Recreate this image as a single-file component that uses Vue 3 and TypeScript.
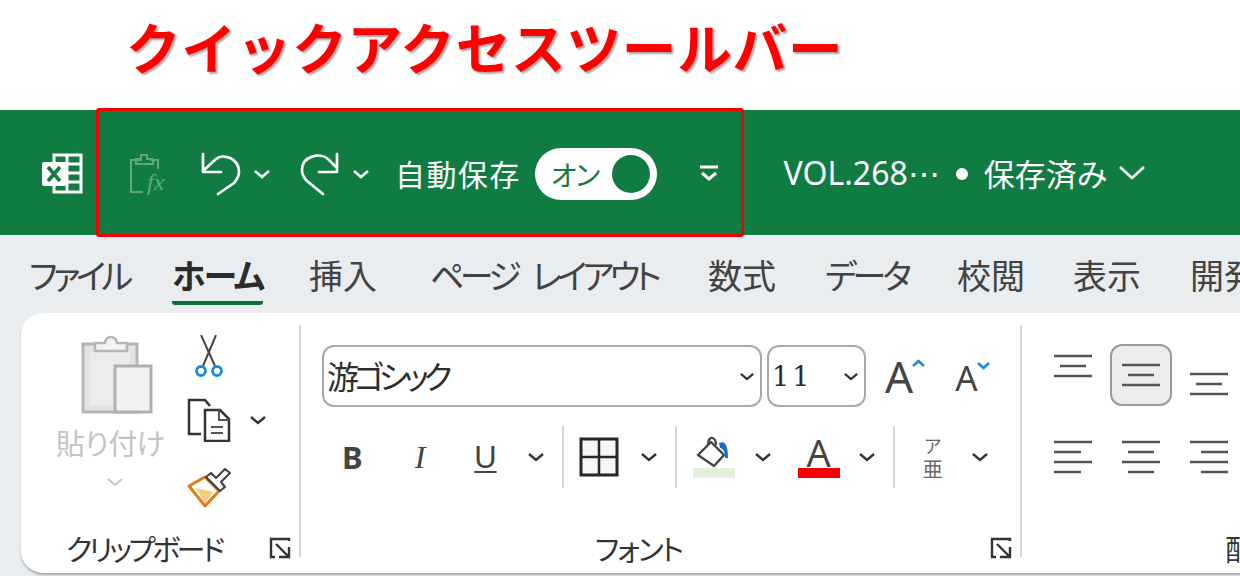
<script setup lang="ts">
// Excel リボンの説明図: クイックアクセスツールバー
const tabs = [
  { label: 'ファイル', width: 143, spacing: -4.5, word: 0 },
  { label: 'ホーム', width: 137, spacing: -2, word: 0, active: true },
  { label: '挿入', width: 121, spacing: 0, word: 0 },
  { label: 'ページ レイアウト', width: 278, spacing: -4.6, word: 12 },
  { label: '数式', width: 117, spacing: 0, word: 0 },
  { label: 'データ', width: 132, spacing: -4, word: 0 },
  { label: '校閲', width: 116, spacing: 0, word: 0 },
  { label: '表示', width: 117, spacing: 0, word: 0 },
  { label: '開発', width: 80, spacing: 0, word: 0 }
]

const topAlign = [
  { id: 'top', active: false },
  { id: 'middle', active: true },
  { id: 'bottom', active: false }
]
</script>

<template>
  <div class="page">
    <header class="caption">クイックアクセスツールバー</header>

    <section class="titlebar">
      <div class="qat-frame"></div>
      <svg class="xl-logo" width="44" height="42" viewBox="0 0 44 42">
        <path d="M14 2h27v37H14z" fill="none" stroke="#fff" stroke-width="3" />
        <path d="M27 3v35M15 11h25M15 20h25M15 29h25" stroke="#fff" stroke-width="3" />
        <rect x="2" y="9" width="24" height="24" rx="2" fill="#fff" />
        <path d="M8 14l12 14M20 14L8 28" stroke="#107c41" stroke-width="3.6" />
      </svg>

      <svg class="qat-fx" width="40" height="44" viewBox="0 0 40 44">
        <path d="M14 8H3v32h12M22 8h8v9" fill="none" stroke="#5fa882" stroke-width="2" />
        <path d="M8 12V7h5V3h6v4h6v5z" fill="none" stroke="#5fa882" stroke-width="2" />
        <text x="19" y="38" class="fx-text">fx</text>
      </svg>

      <svg class="undo" width="42" height="44" viewBox="0 0 42 44">
        <path d="M2 2v18h18M3 18L15 7c7-6 23-1 23 13 0 5-2 7-5 11L17 42" fill="none" stroke="#fff" stroke-width="2.7" stroke-linejoin="round" stroke-linecap="round" />
      </svg>
      <svg class="undo-chev" width="16" height="10" viewBox="0 0 16 10"><path d="M1 2l7 6 7-6" fill="none" stroke="#fff" stroke-width="2.6" /></svg>

      <svg class="redo" width="42" height="44" viewBox="0 0 42 44">
        <path d="M37 2v18H19M36 15l-8-8C20 0 2 4 2 18c0 4 2 8 5 11l16 13" fill="none" stroke="#fff" stroke-width="2.7" stroke-linejoin="round" stroke-linecap="round" />
      </svg>
      <svg class="redo-chev" width="16" height="10" viewBox="0 0 16 10"><path d="M1 2l7 6 7-6" fill="none" stroke="#fff" stroke-width="2.6" /></svg>

      <span class="autosave">自動保存</span>
      <div class="toggle">
        <span class="toggle-text">オン</span>
        <span class="toggle-knob"></span>
      </div>
      <svg class="qat-more" width="20" height="18" viewBox="0 0 20 18">
        <path d="M1 2h18" stroke="#fff" stroke-width="3" />
        <path d="M3 8l7 6 7-6" fill="none" stroke="#fff" stroke-width="3" />
      </svg>

      <span class="doc-name">VOL.268⋯</span>
      <i class="doc-dot"></i>
      <span class="doc-status">保存済み</span>
      <svg class="doc-chev" width="26" height="16" viewBox="0 0 26 16"><path d="M1 2l12 11L25 2" fill="none" stroke="#fff" stroke-width="2.6" /></svg>
    </section>

    <nav class="tabs">
      <div v-for="t in tabs" :key="t.label" class="tab" :class="{ active: t.active }" :style="{ width: t.width + 'px', letterSpacing: t.spacing + 'px', wordSpacing: t.word + 'px' }">
        <span class="tab-label">{{ t.label }}</span>
      </div>
    </nav>

    <section class="ribbon">
      <!-- クリップボード -->
      <div class="group clip">
        <div class="clip-body">
          <div class="paste">
            <svg width="74" height="80" viewBox="0 0 74 80">
              <path d="M3 9h54v68H3z" fill="#e3e3e3" stroke="#b5b5b5" stroke-width="3" />
              <path d="M10 16h40v54H10z" fill="#ececec" />
              <path d="M15 16V8h10c1-8 11-8 12 0h10v8z" fill="#f3f3f3" stroke="#b5b5b5" stroke-width="2.5" />
              <path d="M35 31h36v46H35z" fill="#f2f2f2" stroke="#b0b0b0" stroke-width="3" />
            </svg>
            <span class="paste-label">貼り付け</span>
            <svg class="paste-chev" width="16" height="10" viewBox="0 0 16 10"><path d="M1 2l7 6 7-6" fill="none" stroke="#c6c6c6" stroke-width="2" /></svg>
          </div>
          <div class="clip-tools">
            <svg class="cut" width="30" height="42" viewBox="0 0 30 42">
              <path d="M7 0l14 31M22 0L9 31" stroke="#444" stroke-width="2" fill="none" />
              <circle cx="7" cy="36" r="4.500" fill="none" stroke="#1c8ad6" stroke-width="2.800" />
              <circle cx="23" cy="36" r="4.500" fill="none" stroke="#1c8ad6" stroke-width="2.800" />
            </svg>
            <div class="copy-row">
              <svg width="44" height="44" viewBox="0 0 44 44">
                <path d="M14 36H2V2h16l5 6" fill="none" stroke="#333" stroke-width="2.5" />
                <path d="M18 12h15l9 9v22H18z" fill="#fff" stroke="#333" stroke-width="2.5" />
                <path d="M32 12v10h10M24 29h12M24 35h12" fill="none" stroke="#555" stroke-width="2" />
              </svg>
              <svg class="chev" width="16" height="10" viewBox="0 0 16 10"><path d="M1 2l7 6 7-6" fill="none" stroke="#333" stroke-width="2.4" /></svg>
            </div>
            <svg class="brush" width="44" height="40" viewBox="0 0 44 40">
              <path d="M2 18L18 9l14 14-14 15z" fill="#fff" stroke="#e07b16" stroke-width="3" stroke-linejoin="round" />
              <path d="M9 20l17 4-8 11z" fill="#f6c97c" />
              <path d="M19 9l5-4 5 5 9-9 5 4-9 9 4 5-5 4z" fill="#fff" stroke="#444" stroke-width="2.200" stroke-linejoin="round" />
            </svg>
          </div>
        </div>
        <div class="group-label clip-label">クリップボード</div>
        <svg class="launcher" width="22" height="22" viewBox="0 0 22 22"><path d="M20 4V2H2v18h4M7 7l12 12M20 10v10H10" fill="none" stroke="#333" stroke-width="2.4" /></svg>
      </div>

      <!-- フォント -->
      <div class="group font">
        <div class="font-row top">
          <div class="combo name">
            <span>游ゴシック</span>
            <svg class="chev" width="14" height="9" viewBox="0 0 16 10"><path d="M1 2l7 6 7-6" fill="none" stroke="#333" stroke-width="2.6" /></svg>
          </div>
          <div class="combo size">
            <span>11</span>
            <svg class="chev" width="14" height="9" viewBox="0 0 16 10"><path d="M1 2l7 6 7-6" fill="none" stroke="#333" stroke-width="2.6" /></svg>
          </div>
          <div class="grow-btn big">
            <span class="glyph-a">A</span>
            <svg width="13" height="8" viewBox="0 0 13 8"><path d="M1 7l5.500-5 5.500 5" fill="none" stroke="#1c8ad6" stroke-width="2.600" /></svg>
          </div>
          <div class="grow-btn small">
            <span class="glyph-a">A</span>
            <svg width="13" height="8" viewBox="0 0 13 8"><path d="M1 1l5.500 5 5.500-5" fill="none" stroke="#1c8ad6" stroke-width="2.600" /></svg>
          </div>
        </div>
        <div class="font-row bottom">
          <span class="btn-b">B</span>
          <span class="btn-i">I</span>
          <span class="btn-u">U</span>
          <svg class="chev c-u" width="16" height="10" viewBox="0 0 16 10"><path d="M1 2l7 6 7-6" fill="none" stroke="#333" stroke-width="2.4" /></svg>
          <i class="vsep"></i>
          <svg class="borders" width="40" height="40" viewBox="0 0 40 40">
            <path d="M2 2h36v36H2z" fill="#f7f7f7" stroke="#262626" stroke-width="3" />
            <path d="M20 2v36M2 20h36" stroke="#262626" stroke-width="2.5" />
          </svg>
          <svg class="chev c-b" width="16" height="10" viewBox="0 0 16 10"><path d="M1 2l7 6 7-6" fill="none" stroke="#333" stroke-width="2.4" /></svg>
          <i class="vsep"></i>
          <div class="swatch-btn fill">
            <svg width="36" height="32" viewBox="0 0 36 32">
              <path d="M2 19L15 6l13 13-10 11z" fill="#fff" stroke="#444" stroke-width="2.400" stroke-linejoin="round" />
              <path d="M12 9c0-10 8-9 8 0" fill="none" stroke="#444" stroke-width="2.400" />
              <path d="M23 7c6-3 9 2 9 15h-3c0-6-1-9-5-10z" fill="#1571c0" />
            </svg>
            <i class="swatch pale"></i>
          </div>
          <svg class="chev c-f" width="16" height="10" viewBox="0 0 16 10"><path d="M1 2l7 6 7-6" fill="none" stroke="#333" stroke-width="2.4" /></svg>
          <div class="swatch-btn color">
            <span class="glyph-fc">A</span>
            <i class="swatch red"></i>
          </div>
          <svg class="chev c-c" width="16" height="10" viewBox="0 0 16 10"><path d="M1 2l7 6 7-6" fill="none" stroke="#333" stroke-width="2.4" /></svg>
          <i class="vsep"></i>
          <div class="furi">
            <span class="furi-top">ア</span>
            <span class="furi-bot">亜</span>
          </div>
          <svg class="chev c-p" width="16" height="10" viewBox="0 0 16 10"><path d="M1 2l7 6 7-6" fill="none" stroke="#333" stroke-width="2.4" /></svg>
        </div>
        <div class="group-label font-label">フォント</div>
        <svg class="launcher" width="22" height="22" viewBox="0 0 22 22"><path d="M20 4V2H2v18h4M7 7l12 12M20 10v10H10" fill="none" stroke="#333" stroke-width="2.4" /></svg>
      </div>

      <!-- 配置 -->
      <div class="group align">
        <div class="align-grid">
          <div v-for="a in topAlign" :key="a.id" class="cell" :class="[a.id, { active: a.active }]">
            <svg width="38" height="24" viewBox="0 0 38 24">
              <path d="M0 2h38M6 12h26M0 22h38" stroke="#555" stroke-width="2.500" />
            </svg>
          </div>
          <div class="cell lower">
            <svg width="38" height="34" viewBox="0 0 38 34"><path d="M0 2h38M0 12h27M0 22h38M0 32h27" stroke="#555" stroke-width="2.500" /></svg>
          </div>
          <div class="cell lower">
            <svg width="38" height="34" viewBox="0 0 38 34"><path d="M0 2h38M6 12h26M0 22h38M6 32h26" stroke="#555" stroke-width="2.500" /></svg>
          </div>
          <div class="cell lower">
            <svg width="38" height="34" viewBox="0 0 38 34"><path d="M0 2h38M11 12h27M0 22h38M11 32h27" stroke="#555" stroke-width="2.500" /></svg>
          </div>
        </div>
        <div class="group-label align-label">配置</div>
      </div>
    </section>
  </div>
</template>

<style>
html, body {
  margin: 0;
  background: #fff;
}
</style>

<style scoped>
.page {
  width: 1240px;
  height: 576px;
  overflow: hidden;
  background: linear-gradient(#fff 235px, #e9edf0 235px);
  font-family: "Noto Sans CJK JP", "Noto Sans", sans-serif;
  font-feature-settings: "palt";
  color: #333;
}

.caption {
  height: 110px;
  box-sizing: border-box;
  padding: 13px 0 0 126px;
  font-size: 54.600px;
  line-height: 66px;
  font-weight: 700;
  font-feature-settings: normal;
  letter-spacing: 0.8px;
  white-space: nowrap;
  color: #ff0000;
  text-shadow: 2px 2px 2px rgba(0, 0, 0, 0.35);
}

.titlebar {
  position: relative;
  height: 125px;
  display: flex;
  align-items: center;
  background: #107c41;
  color: #fff;
}

.qat-frame {
  position: absolute;
  left: 96px;
  top: -2px;
  width: 642px;
  height: 123px;
  border: 3px solid #f00000;
  border-radius: 3px;
}

.xl-logo { margin: 2px 0 0 40px; }
.qat-fx { margin: 3px 0 0 44px; }
.undo { margin: 3px 0 0 33px; }
.undo-chev { margin: 2px 0 0 11px; }
.redo { margin: 3px 0 0 30px; }
.redo-chev { margin: 2px 0 0 11px; }

.autosave {
  margin: 1px 0 0 26px;
  font-size: 30px;
  line-height: 40px;
  letter-spacing: 1.400px;
  white-space: nowrap;
}

.toggle {
  width: 122px;
  height: 52px;
  margin: 2px 0 0 14px;
  box-sizing: border-box;
  padding: 0 7px 0 16px;
  display: flex;
  align-items: center;
  justify-content: space-between;
  border-radius: 26px;
  background: #fff;
}

.toggle-text {
  font-size: 28px;
  line-height: 30px;
  letter-spacing: -1px;
  color: #107c41;
}

.toggle-knob {
  width: 38px;
  height: 38px;
  border-radius: 50%;
  background: #107c41;
}

.qat-more { margin: 2px 0 0 42px; }

.doc-name {
  margin: 1px 0 0 65px;
  font-family: "Noto Sans", sans-serif;
  font-size: 32px;
  line-height: 40px;
  white-space: nowrap;
}

.doc-dot {
  display: block;
  flex: none;
  width: 12px;
  height: 12px;
  margin: 2px 0 0 16px;
  border-radius: 50%;
  background: #fff;
}

.doc-status {
  margin: 1px 0 0 16px;
  font-size: 31px;
  line-height: 40px;
  white-space: nowrap;
}

.doc-chev { margin: 0 0 0 12px; }

.tabs {
  height: 78px;
  box-sizing: border-box;
  padding-left: 29px;
  display: flex;
}

.tab {
  flex: none;
  box-sizing: border-box;
  padding-top: 19px;
  white-space: nowrap;
  font-size: 34px;
  line-height: 42px;
  color: #424242;
}

.tab-label {
  display: inline-block;
}

.tab.active .tab-label {
  font-weight: 700;
  color: #2b2b2b;
  padding-bottom: 5px;
  border-bottom: 4px solid #0e6f3b;
  border-radius: 0 0 3px 3px;
}

.ribbon {
  position: relative;
  width: 1300px;
  height: 260px;
  margin-left: 21px;
  display: flex;
  background: #fff;
  border-radius: 22px 0 0 22px;
  box-shadow: 0 2px 2px rgba(0, 0, 0, 0.28);
}

.group {
  position: relative;
  flex: none;
  box-sizing: border-box;
  height: 232px;
  margin-top: 12px;
  border-right: 2px solid #d6d6d6;
}

.group-label {
  position: absolute;
  bottom: -9px;
  font-size: 29px;
  line-height: 36px;
  white-space: nowrap;
  color: #333;
}

.launcher {
  position: absolute;
  right: 8px;
  bottom: -2px;
}

/* クリップボード */
.clip {
  width: 280px;
}

.clip-body {
  display: flex;
  padding: 10px 0 0 59px;
}

.paste {
  width: 108px;
  display: flex;
  flex-direction: column;
  align-items: flex-start;
}

.paste-label {
  margin: 9px 0 0 -24px;
  font-size: 29px;
  line-height: 36px;
  letter-spacing: -0.5px;
  color: #c4c4c4;
  white-space: nowrap;
}

.paste-chev {
  margin: 17px 0 0 27px;
}

.clip-tools {
  display: flex;
  flex-direction: column;
  align-items: flex-start;
  margin-left: -1px;
}

.cut {
  margin: 0 0 0 7px;
}

.copy-row {
  display: flex;
  align-items: center;
  margin-top: 21px;
}

.copy-row .chev {
  margin-left: 19px;
}

.brush {
  margin-top: 26px;
}

.clip-label {
  left: 45px;
  letter-spacing: -3.300px;
}

/* フォント */
.font {
  width: 721px;
}

.font-row {
  display: flex;
  align-items: center;
}

.font-row.top {
  height: 62px;
  margin: 20px 0 0 21px;
  gap: 5px;
}

.combo {
  height: 62px;
  box-sizing: border-box;
  display: flex;
  align-items: center;
  justify-content: space-between;
  padding: 0 6px 0 3px;
  border: 2px solid #a9a9a9;
  border-radius: 12px;
  font-size: 32px;
  letter-spacing: -5px;
  color: #2d2d2d;
}

.combo span {
  margin-top: -3px;
}

.combo.name { width: 440px; }
.combo.size { width: 99px; }

.combo.size span {
  font-family: "DejaVu Serif", "Noto Sans", serif;
  font-size: 27px;
  letter-spacing: 3px;
  margin-top: 0;
}

.grow-btn {
  display: flex;
  align-items: flex-start;
}

.glyph-a {
  font-family: "Noto Sans", sans-serif;
  line-height: 1;
  color: #444;
}

.grow-btn.big { margin-left: 14px; }
.grow-btn.big .glyph-a { font-size: 44px; }
.grow-btn.big svg { margin: 5px 0 0 -1px; }
.grow-btn.small { margin-left: 25px; margin-top: 2px; }
.grow-btn.small .glyph-a { font-size: 35px; }
.grow-btn.small svg { margin: 2px 0 0 -1px; }

.font-row.bottom {
  height: 62px;
  margin: 19px 0 0 41px;
}

.btn-b, .btn-i, .btn-u {
  font-family: "Liberation Sans", sans-serif;
  font-size: 32px;
  line-height: 40px;
  color: #444;
}

.btn-b { font-family: "Noto Sans", sans-serif; font-weight: 700; font-size: 31px; }
.btn-i { margin-left: 52px; font-family: "Liberation Serif", serif; font-style: italic; }
.btn-u {
  margin-left: 49px;
  font-size: 31px;
  line-height: 31px;
  text-decoration: underline;
  text-underline-offset: 3px;
  text-decoration-thickness: 2px;
}

.c-u { margin-left: 31px; }

.vsep {
  display: block;
  flex: none;
  width: 2px;
  height: 62px;
  margin-left: 18px;
  background: #d6d6d6;
}

.borders { margin-left: 15px; }
.c-b { margin-left: 22px; }

.swatch-btn {
  width: 42px;
  display: flex;
  flex-direction: column;
  align-items: center;
}

.swatch {
  display: block;
  width: 42px;
  height: 10px;
}

.swatch.pale { background: #e2efda; }
.swatch.red { background: #f70000; }

.swatch-btn.fill { margin-left: 16px; }
.c-f { margin-left: 20px; }
.swatch-btn.color { margin-left: 27px; }
.c-c { margin-left: 19px; }

.glyph-fc {
  font-family: "Noto Sans", sans-serif;
  font-size: 38px;
  line-height: 32px;
  color: #444;
}

.furi {
  display: flex;
  flex-direction: column;
  align-items: center;
  margin-left: 28px;
  color: #666;
}

.furi-top { font-size: 18px; line-height: 24px; }
.furi-bot { font-size: 20px; line-height: 24px; }
.c-p { margin-left: 29px; }

.font-label { left: 294px; letter-spacing: -2px; }

/* 配置 */
.align {
  width: 260px;
  border-right: 0;
}

.align-grid {
  display: grid;
  grid-template-columns: repeat(3, 62px);
  grid-template-rows: 62px 62px;
  column-gap: 6px;
  row-gap: 19px;
  margin: 19px 0 0 20px;
}

.cell {
  box-sizing: border-box;
  display: flex;
  justify-content: center;
}

.cell.top { align-items: flex-start; padding-top: 10px; }
.cell.middle { align-items: center; }
.cell.bottom { align-items: flex-end; padding-bottom: 10px; }
.cell.lower { align-items: flex-start; padding-top: 15px; }

.cell.active {
  background: #ececec;
  border: 2px solid #9a9a9a;
  border-radius: 12px;
}

.align-label { left: 203px; }

.fx-text {
  font-family: "Liberation Serif", serif;
  font-style: italic;
  font-size: 24px;
  fill: #5fa882;
}
</style>
